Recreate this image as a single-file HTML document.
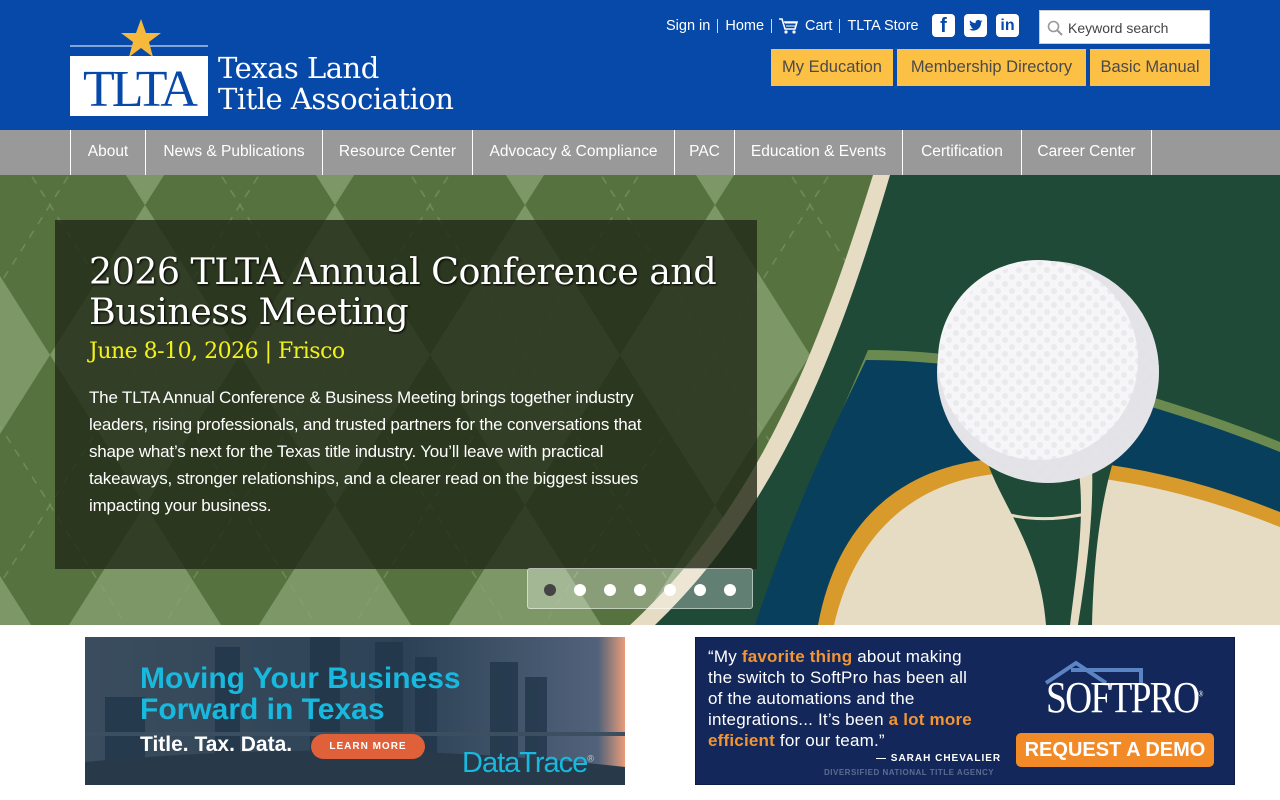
<!DOCTYPE html>
<html><head><meta charset="utf-8"><style>
*{margin:0;padding:0;box-sizing:border-box}
body{width:1280px;height:800px;overflow:hidden;background:#fff;font-family:"Liberation Sans",sans-serif}
.hdr{position:absolute;left:0;top:0;width:1280px;height:130px;background:#0649a9}
.toplinks{position:absolute;top:17px;left:666px;color:#fff;font-size:14.5px;display:flex;align-items:center;white-space:nowrap}
.toplinks .sep{display:inline-block;width:1px;height:14px;background:#fff;margin:0 7px;opacity:.8}
.soc{position:absolute;top:14px;width:23px;height:23px;background:#fff;border-radius:4px;color:#0649a9;font-weight:bold;text-align:center}
.search{position:absolute;left:1039px;top:10px;width:171px;height:34px;background:#fff;border:1px solid #ccc;font-size:14px;color:#444;padding:9px 0 0 28px}
.btn{position:absolute;top:49px;height:37px;background:#fcc044;color:#4a4a4a;font-size:16.5px;line-height:37px;text-align:center}
.nav{position:absolute;top:130px;left:0;width:1280px;height:45px;background:#999}
.nav span{position:absolute;top:0;height:45px;line-height:43px;color:#fff;font-size:15.5px;border-left:1px solid #fff;text-align:center}
.hero{position:absolute;top:175px;left:0;width:1280px;height:450px;overflow:hidden}
.box{position:absolute;left:55px;top:45px;width:702px;height:349px;background:rgba(32,40,22,.8)}
.box h1{position:absolute;left:34px;top:32px;width:680px;font-family:"DejaVu Serif",serif;font-weight:normal;font-size:36.5px;line-height:40px;color:#fff;letter-spacing:-0.6px;text-shadow:1px 1px 2px #000;white-space:nowrap}
.box .date{position:absolute;left:34px;top:119px;font-family:"DejaVu Serif",serif;font-size:22px;color:#f2f21a;letter-spacing:-0.5px}
.box p{position:absolute;left:34px;top:164px;color:#fff;font-size:17px;line-height:27px;white-space:nowrap;letter-spacing:-0.2px}
.dots{position:absolute;left:527px;top:393px;width:226px;height:41px;background:rgba(255,255,255,.3);border:1px solid rgba(255,255,255,.5);border-radius:3px}
.dots i{position:absolute;top:15px;width:12px;height:12px;border-radius:50%;background:#fff}
.ad{position:absolute;top:637px;width:540px;height:148px;overflow:hidden}
</style></head><body>
<div class="hdr">
 <svg width="400" height="120" style="position:absolute;left:60px;top:10px">
  <line x1="10" y1="36" x2="148" y2="36" stroke="#fff" stroke-width="1"/>
  <polygon points="81,9 86,23 101,23 89,32 93,47 81,38 69,47 73,32 61,23 76,23" fill="#f6b93b"/>
  <rect x="10" y="46" width="138" height="60" fill="#fff"/>
  <text x="79" y="96" text-anchor="middle" font-family="Liberation Serif,serif" font-size="52" fill="#0649a9" letter-spacing="-3">TLTA</text>
  <text x="158" y="68" font-family="DejaVu Serif,serif" font-size="29" fill="#fff" letter-spacing="-0.5">Texas Land</text>
  <text x="158" y="99" font-family="DejaVu Serif,serif" font-size="29" fill="#fff" letter-spacing="-0.5">Title Association</text>
 </svg>
 <div class="toplinks">Sign in<span class="sep"></span>Home<span class="sep"></span><svg width="20" height="18" viewBox="0 0 20 18" style="margin-right:6px"><path d="M0 2h3l3 10h10l2-7H5" fill="none" stroke="#fff" stroke-width="1.6"/><path d="M6 6h11M7 9h9" stroke="#fff"/><circle cx="7" cy="15" r="1.6" fill="#fff"/><circle cx="15" cy="15" r="1.6" fill="#fff"/></svg>Cart<span class="sep"></span>TLTA Store</div>
 <div class="soc" style="left:932px;font-size:20px;line-height:25px">f</div>
 <div class="soc" style="left:964px"><svg width="23" height="23" viewBox="0 0 24 24"><path d="M19 7.5c-.5.2-1 .4-1.6.4.6-.3 1-.9 1.2-1.5-.5.3-1.1.5-1.7.7a2.8 2.8 0 0 0-4.8 2.5C9.8 9.5 7.8 8.4 6.4 6.7c-.8 1.3-.4 2.9.9 3.7-.4 0-.9-.1-1.3-.4 0 1.4 1 2.5 2.3 2.8-.4.1-.9.1-1.3 0 .4 1.1 1.4 1.9 2.6 2-1.2.9-2.7 1.3-4.2 1.2 1.3.8 2.8 1.3 4.3 1.3 5.3 0 8.2-4.4 8.1-8.3.6-.4 1-.9 1.4-1.5z" fill="#0649a9"/></svg></div>
 <div class="soc" style="left:996px;font-size:16px;line-height:23px">in</div>
 <div class="search"><svg width="16" height="16" style="position:absolute;left:7px;top:9px"><circle cx="6.5" cy="6.5" r="5" fill="none" stroke="#999" stroke-width="1.6"/><path d="M10 10l5 5" stroke="#999" stroke-width="2"/></svg>Keyword search</div>
 <div class="btn" style="left:771px;width:122px">My Education</div>
 <div class="btn" style="left:897px;width:189px">Membership Directory</div>
 <div class="btn" style="left:1090px;width:120px">Basic Manual</div>
</div>
<div class="nav">
 <span style="left:70px;width:75px">About</span>
 <span style="left:145px;width:177px">News &amp; Publications</span>
 <span style="left:322px;width:150px">Resource Center</span>
 <span style="left:472px;width:202px">Advocacy &amp; Compliance</span>
 <span style="left:674px;width:60px">PAC</span>
 <span style="left:734px;width:168px">Education &amp; Events</span>
 <span style="left:902px;width:119px">Certification</span>
 <span style="left:1021px;width:131px;border-right:1px solid #fff">Career Center</span>
</div>
<div class="hero">
 <svg width="1280" height="450" style="position:absolute;left:0;top:0">
  <defs><pattern id="arg" width="190" height="300" patternUnits="userSpaceOnUse" x="-45" y="-120">
   <rect width="190" height="300" fill="#6c8a53"/>
   <polygon points="95,0 190,150 95,300 0,150" fill="#56733f"/>
   <polygon points="0,150 95,300 0,450 -95,300" fill="#7d9866"/>
   <polygon points="190,150 285,300 190,450 95,300" fill="#7d9866"/>
   <polygon points="0,-150 95,0 0,150 -95,0" fill="#7d9866"/>
   <polygon points="190,-150 285,0 190,150 95,0" fill="#7d9866"/>
   <path d="M0 0L190 300M190 0L0 300" stroke="#8aa374" stroke-width="1.5" stroke-dasharray="8 8" opacity=".5"/>
  </pattern>
  <pattern id="dimp" width="14" height="14" patternUnits="userSpaceOnUse"><circle cx="4" cy="4" r="3" fill="#e2e2e6"/><circle cx="11" cy="11" r="3" fill="#e2e2e6"/></pattern></defs>
  <rect width="1280" height="450" fill="url(#arg)"/>
  <path d="M873 0 C 820 170 760 330 630 450 L1280 450 L1280 0Z" fill="#e6dcc3"/>
  <path d="M890 0 C 840 170 780 330 655 450 L1280 450 L1280 0Z" fill="#1e4a37"/>
  <path d="M868 175 C 1000 175 1150 215 1280 267 L1280 450 L760 450 C 800 330 840 240 868 175Z" fill="#6a8a4f"/>
  <path d="M866 185 C 1000 185 1150 225 1280 277 L1280 450 L755 450 C 795 330 835 250 866 185Z" fill="#073f5c"/>
  <path d="M818 450 C 840 330 920 285 1010 283 C 1110 282 1200 305 1280 337 L1280 450Z" fill="#d89a2b"/>
  <path d="M834 450 C 858 345 930 300 1012 298 C 1110 297 1200 320 1280 352 L1280 450Z" fill="#e6dcc3"/>
  <path d="M985 280 C 1000 330 1040 370 1046 450 L1092 450 C 1094 380 1100 330 1115 280Z" fill="#1e4a37"/>
  <path d="M1078 290 C 1086 340 1076 400 1070 450 L1078 450 C 1086 400 1094 340 1092 290Z" fill="#e6dcc3"/>
  <path d="M1002 338 C 1030 346 1060 345 1090 338" stroke="#e6dcc3" stroke-width="3" fill="none"/>
  <circle cx="1048" cy="197" r="111" fill="#e4e4e8"/>
  <circle cx="1038" cy="185" r="100" fill="#f6f6f8"/>
  <circle cx="1048" cy="197" r="111" fill="url(#dimp)" opacity=".6"/>
 </svg>
 <div class="box">
  <h1>2026 TLTA Annual Conference and<br>Business Meeting</h1>
  <div class="date">June 8-10, 2026 | Frisco</div>
  <p>The TLTA Annual Conference &amp; Business Meeting brings together industry<br>leaders, rising professionals, and trusted partners for the conversations that<br>shape what’s next for the Texas title industry. You’ll leave with practical<br>takeaways, stronger relationships, and a clearer read on the biggest issues<br>impacting your business.</p>
 </div>
 <div class="dots"><i style="left:16px;background:#444"></i><i style="left:46px"></i><i style="left:76px"></i><i style="left:106px"></i><i style="left:136px"></i><i style="left:166px"></i><i style="left:196px"></i></div>
</div>
<div class="ad" style="left:85px;background:linear-gradient(90deg,#3a4d5e,#2d4256 60%,#51627a 95%,#e89c7a)">
 <svg width="540" height="148" style="position:absolute;left:0;top:0">
  <g fill="#22364a" opacity=".8">
   <rect x="130" y="10" width="25" height="138"/><rect x="225" y="0" width="30" height="148"/><rect x="290" y="5" width="28" height="143"/><rect x="330" y="20" width="22" height="128"/><rect x="405" y="25" width="28" height="123"/><rect x="440" y="40" width="22" height="108"/><rect x="20" y="60" width="40" height="88"/>
  </g>
  <rect x="0" y="95" width="540" height="4" fill="#3b4f60"/>
  <path d="M0 125 Q270 100 540 130 L540 148 L0 148Z" fill="#283a4a"/>
 </svg>
 <div style="position:absolute;left:55px;top:26px;color:#18b9de;font-weight:bold;font-size:30px;line-height:31px">Moving Your Business<br>Forward in Texas</div>
 <div style="position:absolute;left:55px;top:96px;color:#fff;font-weight:bold;font-size:21px">Title. Tax. Data.</div>
 <div style="position:absolute;left:226px;top:97px;width:114px;height:25px;border-radius:13px;background:#e0603a;color:#fff;font-size:10px;font-weight:bold;text-align:center;line-height:25px;letter-spacing:1px">LEARN MORE</div>
 <div style="position:absolute;left:377px;top:110px;color:#18b9de;font-size:29px;letter-spacing:-1px">DataTrace<sup style="font-size:9px;color:#ccc">®</sup></div>
</div>
<div class="ad" style="left:695px;background:#13275a;border:1px solid #0d1c44">
 <div style="position:absolute;left:12px;top:8px;color:#fff;font-size:17px;line-height:21px;white-space:nowrap;letter-spacing:.2px">“My <b style="color:#f39530">favorite thing</b> about making<br>the switch to SoftPro has been all<br>of the automations and the<br>integrations... It’s been <b style="color:#f39530">a lot more</b><br><b style="color:#f39530">efficient</b> for our team.”</div>
 <div style="position:absolute;left:180px;top:115px;color:#fff;font-size:10px;font-weight:bold;letter-spacing:1px">— SARAH CHEVALIER</div>
 <div style="position:absolute;left:128px;top:130px;color:#5c6c90;font-size:8px;font-weight:bold;letter-spacing:.5px">DIVERSIFIED NATIONAL TITLE AGENCY</div>
 <svg width="150" height="30" style="position:absolute;left:345px;top:20px"><path d="M5 25 L35 5 L65 25 M30 12 L100 12 L100 25" stroke="#5b84c4" stroke-width="4" fill="none"/></svg>
 <div style="position:absolute;left:350px;top:34px;color:#fff;font-family:'Liberation Serif',serif;font-size:44px;letter-spacing:-2px;transform:scaleX(.85);transform-origin:left">SOFTPRO<sup style="font-size:8px">®</sup></div>
 <div style="position:absolute;left:320px;top:95px;width:198px;height:34px;border-radius:5px;background:#f28a27;color:#fff;font-weight:bold;font-size:20px;text-align:center;line-height:34px">REQUEST A DEMO</div>
</div>
</body></html>
